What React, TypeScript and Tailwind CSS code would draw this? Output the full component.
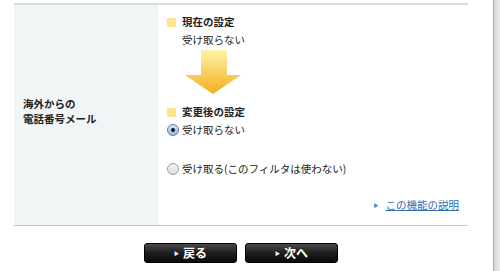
const font = { fontFamily: '"Noto Sans CJK JP", "Noto Sans", sans-serif' }

const Square = () => <span className="inline-block w-[9px] h-[9px] bg-[#fde38a] mr-[6px]" />

const Radio = ({ checked }: { checked?: boolean }) =>
  checked ? (
    <span className="w-[12px] h-[12px] rounded-full border border-[#5d7fa8] bg-gradient-to-b from-[#d3e6f8] to-[#8fbbe6] flex items-center justify-center mr-[3px]">
      <span className="w-[4px] h-[4px] rounded-full bg-[#111]" />
    </span>
  ) : (
    <span className="w-[12px] h-[12px] rounded-full border border-[#9a9a9a] bg-gradient-to-b from-[#f7f7f7] to-[#dcdcdc] mr-[3px]" />
  )

const Arrow = () => (
  <svg width="56" height="44" viewBox="0 0 56 44" className="block">
    <defs>
      <linearGradient id="ag" x1="0" y1="0" x2="0" y2="1">
        <stop offset="0" stopColor="#fff3a8" />
        <stop offset="1" stopColor="#f5ae1c" />
      </linearGradient>
    </defs>
    <path d="M16 0 H42 V25 H56 L28 44 L0 25 H16 Z" fill="url(#ag)" />
  </svg>
)

const Button = ({ label }: { label: string }) => (
  <button className="w-[93px] h-[20px] rounded-[3px] border border-[#000] bg-gradient-to-b from-[#4a4a4a] via-[#1e1e1e] to-[#0a0a0a] text-white font-bold text-[12px] flex items-center justify-center">
    <span className="text-[5px] mr-[4px]">▶</span>
    {label}
  </button>
)

export default function App() {
  return (
    <div className="w-[500px] h-[271px] bg-white flex text-[#222]" style={font}>
      <div className="w-[493px] pt-[3px] pl-[14px]">
        <div className="w-[454px] flex border-t-2 border-b border-t-[#d9dede] border-b-[#c4c8c8]">
          <div className="w-[144px] bg-[#f0f5f5] flex flex-col justify-center pl-[9px] pb-[8px] text-[10.5px] font-bold leading-[15px]">
            <div>海外からの</div>
            <div>電話番号メール</div>
          </div>
          <div className="flex-1 pl-[9px] pt-[9px] pb-[12px] text-[10.5px] leading-[16px]">
            <div className="flex items-center font-bold">
              <Square />
              現在の設定
            </div>
            <div className="mt-[2px] pl-[15px]">受け取らない</div>
            <div className="mt-[2px] pl-[18px]">
              <Arrow />
            </div>
            <div className="mt-[10px] flex items-center font-bold">
              <Square />
              変更後の設定
            </div>
            <div className="mt-[2px] flex items-center">
              <Radio checked />
              受け取らない
            </div>
            <div className="mt-[23px] flex items-center">
              <Radio />
              受け取る(このフィルタは使わない)
            </div>
            <div className="mt-[20px] flex justify-end items-center pr-[9px]">
              <span className="text-[5px] text-[#3a8ccf] mr-[7px]">▶</span>
              <span className="underline text-[#2d6fb3]">この機能の説明</span>
            </div>
          </div>
        </div>
        <div className="w-[454px] flex justify-center gap-[8px] mt-[17px]">
          <Button label="戻る" />
          <Button label="次へ" />
        </div>
      </div>
      <div className="w-[7px] border-l border-[#a9a9a9] bg-gradient-to-r from-[#d6d6d6] to-[#ececec]" />
    </div>
  )
}
